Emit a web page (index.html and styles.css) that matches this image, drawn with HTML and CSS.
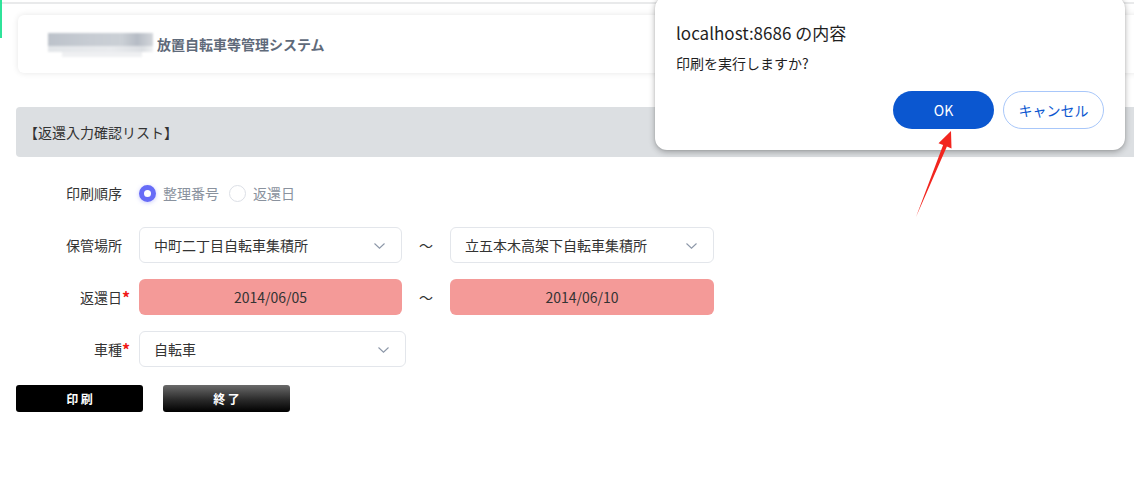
FILE: index.html
```html
<!DOCTYPE html>
<html lang="ja">
<head>
<meta charset="utf-8">
<title>返還入力確認リスト</title>
<link rel="stylesheet" href="styles.css">
</head>
<body>
<div class="topline"></div>
<div class="page">
  <header class="brand-card">
    <div class="logo-blur"><span class="lb lb1"></span><span class="lb lb2"></span><span class="lb lb3"></span></div>
    <span class="brand-title">放置自転車等管理システム</span>
  </header>

  <div class="section-bar">【返還入力確認リスト】</div>

  <div class="form">
    <div class="row">
      <div class="label">印刷順序</div>
      <div class="radios">
        <span class="radio checked"></span><span class="radio-text">整理番号</span>
        <span class="radio"></span><span class="radio-text">返還日</span>
      </div>
    </div>
    <div class="row">
      <div class="label">保管場所</div>
      <div class="select w263"><span>中町二丁目自転車集積所</span><svg class="chev" width="11" height="6" viewBox="0 0 11 6"><path d="M0.5 0.5 L5.5 5.2 L10.5 0.5" fill="none" stroke="#8c97a8" stroke-width="1.1"/></svg></div>
      <div class="tilde">〜</div>
      <div class="select w264"><span>立五本木高架下自転車集積所</span><svg class="chev" width="11" height="6" viewBox="0 0 11 6"><path d="M0.5 0.5 L5.5 5.2 L10.5 0.5" fill="none" stroke="#8c97a8" stroke-width="1.1"/></svg></div>
    </div>
    <div class="row">
      <div class="label req">返還日</div>
      <div class="date w263">2014/06/05</div>
      <div class="tilde">〜</div>
      <div class="date w264">2014/06/10</div>
    </div>
    <div class="row">
      <div class="label req">車種</div>
      <div class="select w267"><span>自転車</span><svg class="chev" width="11" height="6" viewBox="0 0 11 6"><path d="M0.5 0.5 L5.5 5.2 L10.5 0.5" fill="none" stroke="#8c97a8" stroke-width="1.1"/></svg></div>
    </div>
  </div>

  <div class="actions">
    <button class="btn btn-print">印 刷</button>
    <button class="btn btn-end">終 了</button>
  </div>
</div>

<div class="dialog">
  <div class="dlg-title">localhost:8686 の内容</div>
  <div class="dlg-msg">印刷を実行しますか?</div>
  <div class="dlg-buttons">
    <button class="dlg-btn dlg-ok">OK</button>
    <button class="dlg-btn dlg-cancel">キャンセル</button>
  </div>
</div>

<svg class="arrow" width="1134" height="482" viewBox="0 0 1134 482">
  <polygon points="916,217 943.1,145 938.5,143.2 951,131 951.5,148.4 946.9,146.6" fill="#f2261f"/>
</svg>
<div class="green-edge"></div>
</body>
</html>
```

FILE: styles.css
```css
* { box-sizing: border-box; }
html, body { margin: 0; padding: 0; background: #fff; }
body {
  font-family: "Noto Sans CJK JP", "Noto Sans", sans-serif;
  font-size: 14px;
  color: #333;
  width: 1134px;
  height: 482px;
  overflow: hidden;
  position: relative;
}
.topline {
  height: 4px;
  border-bottom: 2px solid #e9eaeb;
}
.page { width: 1134px; }
.brand-card {
  margin: 11px 0 0 18px;
  height: 58px;
  width: 1140px;
  background: #fff;
  border-radius: 6px;
  box-shadow: 0 0 6px rgba(0,0,0,0.10);
  display: flex;
  align-items: center;
  padding-left: 30px;
}
.logo-blur {
  width: 105px;
  height: 25px;
  position: relative;
  filter: blur(1.2px);
  margin-right: 4px;
  margin-top: 3px;
}
.lb { position: absolute; display: block; }
.lb1 { left: 0; top: 0; width: 105px; height: 13px; background: linear-gradient(90deg, #bcc2ca 0%, #c7ccd3 40%, #cbd0d6 70%, #b6bcc5 85%, #d3d6db 100%); }
.lb2 { left: 0; top: 13px; width: 105px; height: 6px; background: linear-gradient(90deg, #e3e6e9, #e9ebee 60%, #dcdfe3 90%, #f0f1f3); }
.lb3 { left: 14px; top: 19px; width: 80px; height: 5px; background: #eff0f2; }
.brand-title {
  font-size: 14px;
  font-weight: 700;
  color: #5f6a7a;
}
.section-bar {
  margin: 34px 0 0 16px;
  height: 50px;
  width: 1130px;
  background: #dcdfe2;
  border-radius: 4px;
  display: flex;
  align-items: center;
  padding-left: 8px;
  font-size: 14px;
  color: #333;
}
.form {
  margin-top: 18px;
  display: flex;
  flex-direction: column;
  gap: 16px;
}
.row {
  display: flex;
  align-items: center;
  height: 36px;
}
.label {
  width: 122px;
  margin-right: 17px;
  text-align: right;
  font-size: 14px;
  color: #333;
  position: relative;
}
.label.req::after {
  content: "*";
  color: #f01818;
  position: absolute;
  right: -8px;
  top: -2px;
  font-size: 16px;
  font-weight: 700;
}
.radios {
  display: flex;
  align-items: center;
}
.radio {
  width: 17px;
  height: 17px;
  border-radius: 50%;
  border: 1px solid #dcdfe6;
  background: #fff;
  margin-right: 7px;
  display: inline-block;
}
.radio.checked {
  border: 5px solid #676cf7;
  background: #fff;
  box-shadow: 0 1px 4px rgba(103,108,247,0.35);
}
.radio-text {
  color: #8a929e;
  margin-right: 10px;
}
.select {
  height: 36px;
  border: 1px solid #e3e6eb;
  border-radius: 6px;
  background: #fff;
  display: flex;
  align-items: center;
  justify-content: space-between;
  padding: 0 16px 0 14px;
  color: #333;
}
.chev { display: block; margin-top: 1px; }
.w263 { width: 263px; }
.w264 { width: 264px; }
.w267 { width: 267px; }
.tilde {
  width: 48px;
  text-align: center;
  color: #333;
  font-size: 14px;
}
.date {
  height: 36px;
  background: #f49a98;
  border-radius: 6px;
  display: flex;
  align-items: center;
  justify-content: center;
  color: #333;
  font-size: 14px;
}
.actions {
  margin: 18px 0 0 16px;
  display: flex;
  gap: 20px;
}
.btn {
  width: 127px;
  height: 27px;
  border: none;
  border-radius: 3px;
  color: #fff;
  font-family: "Noto Sans CJK JP", sans-serif;
  font-size: 12px;
  font-weight: 700;
  padding: 0;
}
.btn-print { background: #000; }
.btn-end { background: linear-gradient(180deg, #6a6a6a 0%, #2a2a2a 55%, #000 100%); }

.dialog {
  position: absolute;
  left: 655px;
  top: -4px;
  width: 470px;
  height: 154px;
  background: #fff;
  border-radius: 12px;
  box-shadow: 0 2px 6px rgba(0,0,0,0.30), 0 0 2px rgba(0,0,0,0.12);
  padding: 25px 21px 0 21px;
  font-family: "Noto Sans CJK JP", "Noto Sans", sans-serif;
}
.dlg-title {
  font-size: 17px;
  color: #1f1f1f;
  line-height: 24px;
}
.dlg-msg {
  margin-top: 8px;
  font-size: 14px;
  color: #1f1f1f;
  line-height: 20px;
}
.dlg-buttons {
  display: flex;
  justify-content: flex-end;
  gap: 9px;
  margin-top: 18px;
}
.dlg-btn {
  width: 101px;
  height: 38px;
  border-radius: 19px;
  font-family: "Noto Sans CJK JP", sans-serif;
  font-size: 14px;
  padding: 0;
}
.dlg-ok {
  background: #0b57d0;
  color: #fff;
  border: none;
}
.dlg-cancel {
  background: #fff;
  color: #0b57d0;
  border: 1px solid #a8c7fa;
}
.arrow {
  position: absolute;
  left: 0;
  top: 0;
  pointer-events: none;
}
.green-edge {
  position: absolute;
  left: 0;
  top: 0;
  width: 2px;
  height: 38px;
  background: #2fe39a;
}
```
